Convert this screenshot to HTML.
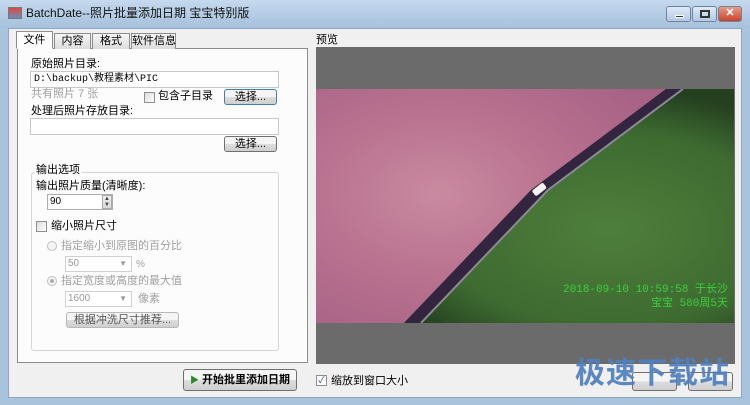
<!DOCTYPE html>
<html><head><meta charset="utf-8">
<style>
*{margin:0;padding:0;box-sizing:border-box}
body{width:750px;height:405px;overflow:hidden;background:#a9c3dd;font-family:"Liberation Sans","Noto Sans CJK SC",sans-serif;font-size:11px;line-height:13px;color:#000;position:relative;white-space:nowrap}
.abs{position:absolute}
.title{left:0;top:0;width:750px;height:28px;background:linear-gradient(#c5d9ee,#a6c1dc)}
.client{left:8px;top:28px;width:734px;height:370px;background:#f0f0f0;border:1px solid #8ea6c0}
.tab{top:33px;height:16px;border:1px solid #8d8d8d;border-bottom:none;background:linear-gradient(#f6f6f6,#dcdcdc);font-size:11px;line-height:15px;text-align:center}
.panel{left:17px;top:48px;width:291px;height:315px;background:#fcfcfc;border:1px solid #8d8d8d}
.inp{background:#fff;border:1px solid #c8c8c8}
.btn{border:1px solid #707070;border-radius:3px;background:linear-gradient(#f4f4f4 50%,#dddddd 50%,#cfcfcf);text-align:center;line-height:14px;font-size:11px}
.cb{width:11px;height:11px;border:1px solid #8f8f8f;background:linear-gradient(135deg,#dcdcdc,#fff)}
.gray{color:#a0a0a0}
.wb{top:6px;height:16px;border:1px solid #6d84a0;border-radius:3px}
</style></head><body>
<div class="abs title"></div>
<div class="abs" style="left:8px;top:7px;width:14px;height:12px;background:linear-gradient(#e04a3a,#6a8cc0);border:1px solid #777"></div>
<div class="abs" style="left:26px;top:7px;font-size:12px;color:#111">BatchDate--照片批量添加日期 宝宝特别版</div>
<div class="abs wb" style="left:666px;width:25px;background:linear-gradient(#dfeaf6,#b3c9e2)"><div class="abs" style="left:8px;top:8px;width:9px;height:3px;background:#333;border:1px solid #fff"></div></div>
<div class="abs wb" style="left:692px;width:25px;background:linear-gradient(#dfeaf6,#b3c9e2)"><div class="abs" style="left:7px;top:3px;width:10px;height:8px;border:2px solid #333"></div></div>
<div class="abs wb" style="left:718px;width:24px;background:linear-gradient(#e89a86,#c8432a);color:#fff;font-weight:bold;text-align:center;line-height:13px">✕</div>
<div class="abs client"></div>

<div class="abs panel"></div>
<div class="abs tab" style="left:16px;top:31px;height:18px;width:37px;background:#fcfcfc;border-bottom:1px solid #fcfcfc;z-index:2;line-height:17px">文件</div>
<div class="abs tab" style="left:54px;width:37px">内容</div>
<div class="abs tab" style="left:92px;width:38px">格式</div>
<div class="abs tab" style="left:131px;width:45px">软件信息</div>

<div class="abs" style="left:31px;top:58px">原始照片目录:</div>
<div class="abs inp" style="left:30px;top:71px;width:249px;height:17px;font-family:'Liberation Mono','Noto Sans CJK SC',monospace;font-size:10px;line-height:15px;padding-left:3px">D:\backup\教程素材\PIC</div>
<div class="abs gray" style="left:31px;top:88px">共有照片 7 张</div>
<div class="abs cb" style="left:144px;top:92px"></div>
<div class="abs" style="left:158px;top:90px">包含子目录</div>
<div class="abs btn" style="left:224px;top:89px;width:53px;height:16px;border-color:#3c7fb1">选择...</div>
<div class="abs" style="left:31px;top:105px">处理后照片存放目录:</div>
<div class="abs inp" style="left:30px;top:118px;width:249px;height:17px"></div>
<div class="abs btn" style="left:224px;top:136px;width:53px;height:16px">选择...</div>

<div class="abs" style="left:31px;top:172px;width:248px;height:179px;border:1px solid #d5d5d5;border-radius:3px"></div>
<div class="abs" style="left:34px;top:164px;background:#fcfcfc;padding:0 2px">输出选项</div>
<div class="abs" style="left:36px;top:180px">输出照片质量(清晰度):</div>
<div class="abs inp" style="left:47px;top:194px;width:66px;height:16px;border-color:#abadb3;font-size:10px;line-height:14px;padding-left:2px">90</div>
<div class="abs" style="left:102px;top:195px;width:10px;height:14px;background:linear-gradient(#eee,#d8d8d8);border:1px solid #aaa;font-size:6px;line-height:6px;text-align:center;color:#444">▲<br>▼</div>
<div class="abs cb" style="left:36px;top:221px"></div>
<div class="abs" style="left:51px;top:220px">缩小照片尺寸</div>
<div class="abs" style="left:47px;top:241px;width:10px;height:10px;border:1px solid #c0c0c0;border-radius:50%;background:#f4f4f4"></div>
<div class="abs gray" style="left:61px;top:240px">指定缩小到原图的百分比</div>
<div class="abs inp" style="left:65px;top:256px;width:67px;height:16px;border-color:#d0d0d0;font-size:10px;line-height:14px;padding-left:2px;color:#999">50<span style="position:absolute;right:4px;font-size:8px">▼</span></div>
<div class="abs gray" style="left:136px;top:258px;font-size:10px">%</div>
<div class="abs" style="left:47px;top:276px;width:10px;height:10px;border:1px solid #c0c0c0;border-radius:50%;background:radial-gradient(#aaa 30%,#f4f4f4 40%)"></div>
<div class="abs gray" style="left:61px;top:275px">指定宽度或高度的最大值</div>
<div class="abs inp" style="left:65px;top:291px;width:67px;height:16px;border-color:#d0d0d0;font-size:10px;line-height:14px;padding-left:2px;color:#999">1600<span style="position:absolute;right:4px;font-size:8px">▼</span></div>
<div class="abs gray" style="left:138px;top:293px">像素</div>
<div class="abs btn" style="left:66px;top:312px;width:113px;height:16px;border-color:#b8b8b8;color:#555">根据冲洗尺寸推荐...</div>

<div class="abs btn" style="left:183px;top:369px;width:114px;height:22px;line-height:20px;font-weight:bold"><span style="color:#2a8a2a;font-size:9px">▶</span> 开始批里添加日期</div>

<div class="abs" style="left:316px;top:34px">预览</div>
<div class="abs" style="left:316px;top:47px;width:419px;height:317px;background:#6b6b6b"></div>
<svg class="abs" style="left:316px;top:89px" width="418" height="234" viewBox="0 0 418 234">
<defs>
<radialGradient id="p" cx="35%" cy="45%" r="70%"><stop offset="0" stop-color="#c98aa0"/><stop offset="0.5" stop-color="#b9728f"/><stop offset="1" stop-color="#a86285"/></radialGradient>
<radialGradient id="g" cx="70%" cy="60%" r="60%"><stop offset="0" stop-color="#4f7f3c"/><stop offset="0.7" stop-color="#3d6a30"/><stop offset="1" stop-color="#24401f"/></radialGradient>
</defs>
<rect width="418" height="234" fill="url(#g)"/>
<polygon points="0,0 350,0 215,101 88,234 0,234" fill="url(#p)"/>
<polygon points="350,0 366,0 231,101 104,234 88,234 215,101" fill="#33243f"/>
<polyline points="367,0 232,101 105,234" fill="none" stroke="#8c8a94" stroke-width="2"/>
<rect x="216" y="97" width="14" height="7" rx="2" fill="#f2f2f2" transform="rotate(-38 223 100)"/>
<text x="412" y="203" text-anchor="end" fill="#3ccf3c" font-family="Liberation Mono,Noto Sans CJK SC,monospace" font-size="11">2018-09-10 10:59:58 于长沙</text>
<text x="412" y="217" text-anchor="end" fill="#3ccf3c" font-family="Liberation Mono,Noto Sans CJK SC,monospace" font-size="11">宝宝 580周5天</text>
</svg>

<div class="abs cb" style="left:316px;top:375px;background:#fff;font-size:9px;line-height:8px;color:#2a4a8a;text-align:center">✓</div>
<div class="abs" style="left:331px;top:375px">缩放到窗口大小</div>
<div class="abs btn" style="left:632px;top:372px;width:45px;height:19px"></div>
<div class="abs btn" style="left:688px;top:372px;width:45px;height:19px"></div>
<div class="abs" style="left:575px;top:356px;font-size:30px;line-height:36px;font-weight:bold;color:#4f7fbf;letter-spacing:1px;opacity:.92">极速下载站</div>
</body></html>
